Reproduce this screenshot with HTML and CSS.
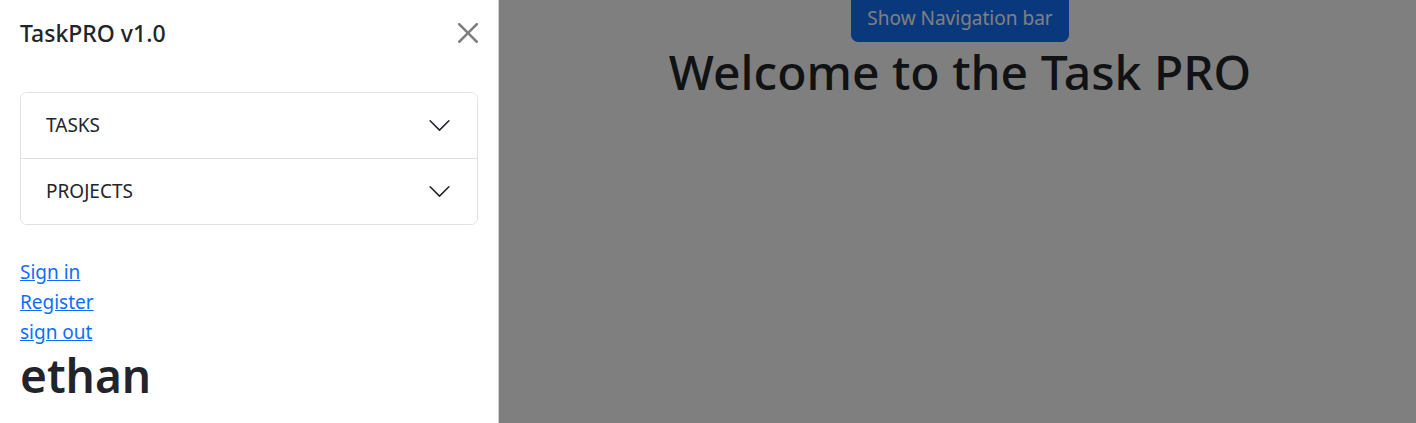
FILE: index.html
```html
<!DOCTYPE html>
<html lang="en">
<head>
<meta charset="utf-8">
<title>TaskPRO</title>
<link rel="stylesheet" href="styles.css">
</head>
<body>
<div class="page">
  <aside class="page-side"></aside>
  <main class="page-main">
    <button class="btn-show" type="button">Show Navigation bar</button>
    <h1 class="welcome">Welcome to the Task PRO</h1>
  </main>
</div>
<div class="backdrop"></div>
<div class="offcanvas">
  <div class="oc-header">
    <h5 class="oc-title">TaskPRO v1.0</h5>
    <button class="btn-close" type="button" aria-label="Close">
      <svg viewBox="0 0 16 16" width="20" height="20"><path fill="#000" d="M.293.293a1 1 0 0 1 1.414 0L8 6.586 14.293.293a1 1 0 1 1 1.414 1.414L9.414 8l6.293 6.293a1 1 0 0 1-1.414 1.414L8 9.414l-6.293 6.293a1 1 0 0 1-1.414-1.414L6.586 8 .293 1.707a1 1 0 0 1 0-1.414z"/></svg>
    </button>
  </div>
  <div class="oc-body">
    <div class="accordion">
      <div class="acc-item">
        <button class="acc-btn" type="button">
          <span>TASKS</span>
          <svg class="acc-icon" viewBox="0 0 16 16" width="25" height="25"><path fill="#212529" fill-rule="evenodd" d="M1.646 4.646a.5.5 0 0 1 .708 0L8 10.293l5.646-5.647a.5.5 0 0 1 .708.708l-6 6a.5.5 0 0 1-.708 0l-6-6a.5.5 0 0 1 0-.708z"/></svg>
        </button>
      </div>
      <div class="acc-item">
        <button class="acc-btn" type="button">
          <span>PROJECTS</span>
          <svg class="acc-icon" viewBox="0 0 16 16" width="25" height="25"><path fill="#212529" fill-rule="evenodd" d="M1.646 4.646a.5.5 0 0 1 .708 0L8 10.293l5.646-5.647a.5.5 0 0 1 .708.708l-6 6a.5.5 0 0 1-.708 0l-6-6a.5.5 0 0 1 0-.708z"/></svg>
        </button>
      </div>
    </div>
    <nav class="links">
      <a href="#">Sign in</a>
      <a href="#">Register</a>
      <a href="#">sign out</a>
    </nav>
    <h1 class="user">ethan</h1>
  </div>
</div>
</body>
</html>
```
FILE: styles.css
```css
* { box-sizing: border-box; }
html, body { margin: 0; height: 100%; }
body {
  font-family: "Noto Sans", "Open Sans", sans-serif;
  font-size: 19px;
  line-height: 1.5;
  color: #212529;
  background: #fff;
  overflow: hidden;
}
.page {
  display: grid;
  grid-template-columns: 504px 1fr;
  min-height: 100%;
}
.page-main {
  display: flex;
  flex-direction: column;
  align-items: center;
  text-align: center;
}
.btn-show {
  margin-top: -6px;
  font-family: inherit;
  font-size: 19px;
  line-height: 30px;
  padding: 8px 15px;
  color: #fff;
  background: #1470fa;
  border: 1px solid #1470fa;
  border-radius: 7px;
}
.welcome {
  margin: 0;
  font-size: 48px;
  font-weight: 500;
  line-height: 59px;
}
.backdrop {
  position: fixed;
  inset: 0;
  background: #000;
  opacity: .5;
}
.offcanvas {
  position: fixed;
  top: 0;
  bottom: 0;
  left: 0;
  width: 499px;
  background: #fff;
  border-right: 1px solid rgba(0,0,0,.175);
  display: flex;
  flex-direction: column;
}
.oc-header {
  display: flex;
  align-items: center;
  justify-content: space-between;
  padding: 18px 20px 24px;
}
.oc-title {
  margin: 0;
  font-size: 23px;
  font-weight: 500;
  line-height: 30px;
}
.btn-close {
  width: 30px;
  height: 30px;
  padding: 5px;
  margin-right: -5px;
  border: 0;
  background: transparent;
  opacity: .5;
  display: flex;
}
.oc-body {
  padding: 20px;
}
.accordion {
  border: 1px solid #dee2e6;
  border-radius: 7px;
  overflow: hidden;
}
.acc-item + .acc-item {
  border-top: 1px solid #dee2e6;
}
.acc-btn {
  width: 100%;
  display: flex;
  align-items: center;
  justify-content: space-between;
  padding: 18px 25px;
  font-family: inherit;
  font-size: 19px;
  line-height: 29px;
  color: #212529;
  background: #fff;
  border: 0;
  text-align: left;
}
.acc-icon { flex: none; }
.links {
  display: flex;
  flex-direction: column;
  align-items: flex-start;
  margin-top: 32px;
}
.links a {
  color: #0d6efd;
  line-height: 30px;
}
.user {
  margin: 0;
  font-size: 46px;
  font-weight: 600;
  line-height: 56px;
}
```
